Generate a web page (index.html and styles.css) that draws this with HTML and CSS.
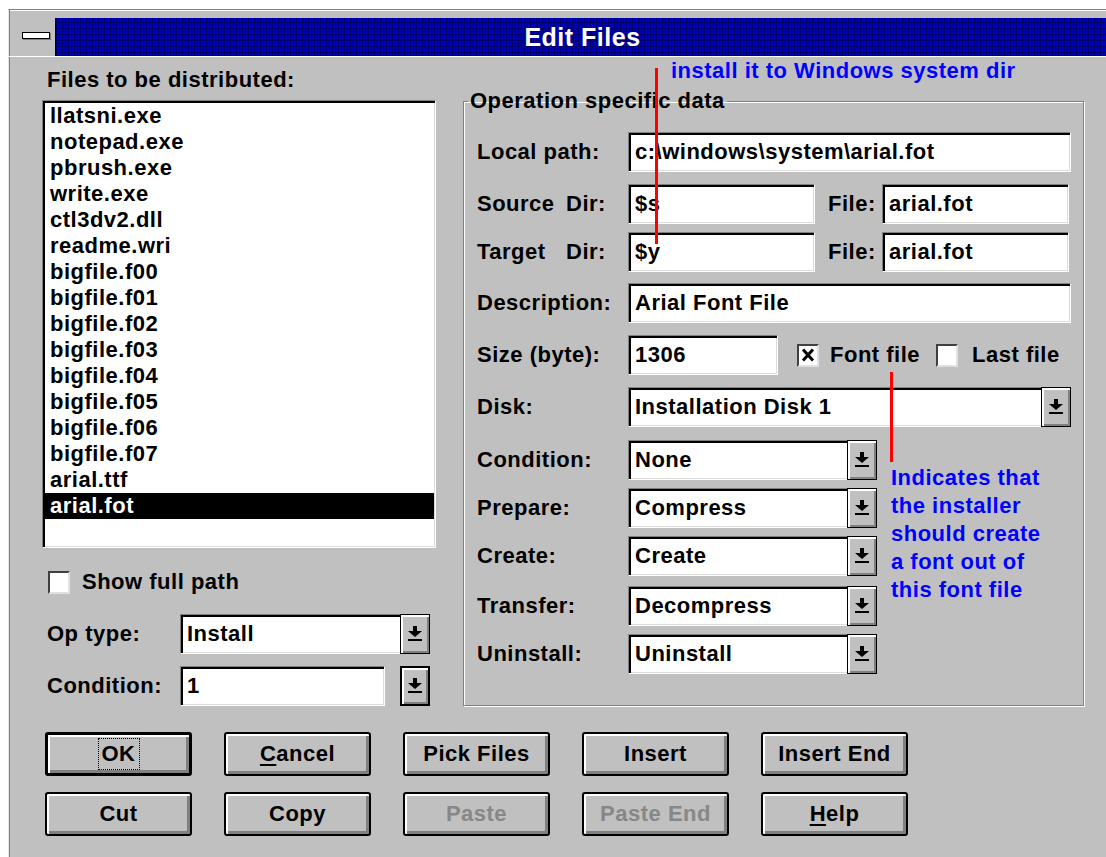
FILE: index.html
```html
<!DOCTYPE html>
<html lang="en">
<head>
<meta charset="utf-8">
<title>Edit Files</title>
<link rel="stylesheet" href="styles.css">
</head>
<body>
<div class="window">
  <div class="titlebar">
    <div class="sysmenu"><span class="sysbar"></span></div>
    <div class="caption">Edit Files</div>
  </div>

  <div class="client">
    <div class="main">
      <div class="leftcol">
        <div class="files-label">Files to be distributed:</div>
        <ul class="listbox sunken">
          <li>llatsni.exe</li>
          <li>notepad.exe</li>
          <li>pbrush.exe</li>
          <li>write.exe</li>
          <li>ctl3dv2.dll</li>
          <li>readme.wri</li>
          <li>bigfile.f00</li>
          <li>bigfile.f01</li>
          <li>bigfile.f02</li>
          <li>bigfile.f03</li>
          <li>bigfile.f04</li>
          <li>bigfile.f05</li>
          <li>bigfile.f06</li>
          <li>bigfile.f07</li>
          <li>arial.ttf</li>
          <li class="selected">arial.fot</li>
        </ul>

        <div class="check show-path"><span class="box sunken-box"></span><span>Show full path</span></div>

        <div class="left-row optype">
          <span class="left-label">Op type:</span>
          <div class="combo sunken w-op">
            <span class="value">Install</span>
            <span class="drop"><svg class="arrow" viewBox="0 0 14 16" width="14" height="16"><rect x="5" y="0" width="4" height="5"/><polygon points="0,5 14,5 7,11"/><rect x="0" y="13" width="14" height="2"/></svg></span>
          </div>
        </div>

        <div class="left-row cond">
          <span class="left-label">Condition:</span>
          <div class="edit sunken w-cond"><span class="value">1</span></div>
          <span class="drop solo"><svg class="arrow" viewBox="0 0 14 16" width="14" height="16"><rect x="5" y="0" width="4" height="5"/><polygon points="0,5 14,5 7,11"/><rect x="0" y="13" width="14" height="2"/></svg></span>
        </div>
      </div>

      <fieldset class="group">
        <legend>Operation specific data</legend>
        <div class="form">
          <span class="lbl">Local path:</span>
          <div class="edit sunken w-full"><span class="value">c:\windows\system\arial.fot</span></div>

          <span class="lbl"><span class="lbl-word">Source</span>Dir:</span>
          <div class="pair">
            <div class="edit sunken w-half"><span class="value">$s</span></div>
            <span class="file-lbl">File:</span>
            <div class="edit sunken w-half"><span class="value">arial.fot</span></div>
          </div>

          <span class="lbl"><span class="lbl-word">Target</span>Dir:</span>
          <div class="pair">
            <div class="edit sunken w-half"><span class="value">$y</span></div>
            <span class="file-lbl">File:</span>
            <div class="edit sunken w-half"><span class="value">arial.fot</span></div>
          </div>

          <span class="lbl">Description:</span>
          <div class="edit sunken w-full"><span class="value">Arial Font File</span></div>

          <span class="lbl">Size (byte):</span>
          <div class="pair">
            <div class="edit sunken w-size"><span class="value">1306</span></div>
            <div class="check font-check">
              <span class="box sunken-box"><svg viewBox="0 0 18 18" width="18" height="18"><path d="M4 3.5 L14 14.5 M14 3.5 L4 14.5" stroke="#000" stroke-width="3" fill="none"/></svg></span>
              <span>Font file</span>
            </div>
            <div class="check last-check"><span class="box sunken-box"></span><span>Last file</span></div>
          </div>

          <span class="lbl">Disk:</span>
          <div class="combo sunken w-full">
            <span class="value">Installation Disk 1</span>
            <span class="drop"><svg class="arrow" viewBox="0 0 14 16" width="14" height="16"><rect x="5" y="0" width="4" height="5"/><polygon points="0,5 14,5 7,11"/><rect x="0" y="13" width="14" height="2"/></svg></span>
          </div>

          <span class="lbl">Condition:</span>
          <div class="combo sunken w-combo">
            <span class="value">None</span>
            <span class="drop"><svg class="arrow" viewBox="0 0 14 16" width="14" height="16"><rect x="5" y="0" width="4" height="5"/><polygon points="0,5 14,5 7,11"/><rect x="0" y="13" width="14" height="2"/></svg></span>
          </div>

          <span class="lbl">Prepare:</span>
          <div class="combo sunken w-combo">
            <span class="value">Compress</span>
            <span class="drop"><svg class="arrow" viewBox="0 0 14 16" width="14" height="16"><rect x="5" y="0" width="4" height="5"/><polygon points="0,5 14,5 7,11"/><rect x="0" y="13" width="14" height="2"/></svg></span>
          </div>

          <span class="lbl">Create:</span>
          <div class="combo sunken w-combo">
            <span class="value">Create</span>
            <span class="drop"><svg class="arrow" viewBox="0 0 14 16" width="14" height="16"><rect x="5" y="0" width="4" height="5"/><polygon points="0,5 14,5 7,11"/><rect x="0" y="13" width="14" height="2"/></svg></span>
          </div>

          <span class="lbl">Transfer:</span>
          <div class="combo sunken w-combo">
            <span class="value">Decompress</span>
            <span class="drop"><svg class="arrow" viewBox="0 0 14 16" width="14" height="16"><rect x="5" y="0" width="4" height="5"/><polygon points="0,5 14,5 7,11"/><rect x="0" y="13" width="14" height="2"/></svg></span>
          </div>

          <span class="lbl">Uninstall:</span>
          <div class="combo sunken w-combo">
            <span class="value">Uninstall</span>
            <span class="drop"><svg class="arrow" viewBox="0 0 14 16" width="14" height="16"><rect x="5" y="0" width="4" height="5"/><polygon points="0,5 14,5 7,11"/><rect x="0" y="13" width="14" height="2"/></svg></span>
          </div>
        </div>
      </fieldset>
    </div>

    <div class="buttons">
      <button class="btn default"><span class="focus">OK</span></button>
      <button class="btn"><u>C</u>ancel</button>
      <button class="btn">Pick Files</button>
      <button class="btn">Insert</button>
      <button class="btn">Insert End</button>
      <button class="btn">Cut</button>
      <button class="btn">Copy</button>
      <button class="btn disabled">Paste</button>
      <button class="btn disabled">Paste End</button>
      <button class="btn"><u>H</u>elp</button>
    </div>
  </div>

  <!-- callout notes drawn over the dialog -->
  <span class="pointer pointer-dir"></span>
  <div class="note note-dir">install it to Windows system dir</div>
  <span class="pointer pointer-font"></span>
  <div class="note note-font">Indicates that<br>the installer<br>should create<br>a font out of<br>this font file</div>
</div>
</body>
</html>
```

FILE: styles.css
```css
html, body {
  margin: 0;
  padding: 0;
  background: #fff;
  overflow: hidden;
}

body {
  font-family: "Liberation Sans", Arial, sans-serif;
  font-weight: bold;
  font-size: 22px;
  letter-spacing: 0.5px;
  color: #000;
}

/* dialog frame */
.window {
  position: relative;
  margin: 9px 0 0 8px;
  width: 1110px;
  height: 860px;
  background: #c0c0c0;
  border-top: 1px solid #808080;
  border-left: 1px solid #e4e4e4;
  box-shadow: inset 1px 0 0 #808080, inset 0 1px 0 #fff;
}

.titlebar {
  display: flex;
  height: 38px;
  margin: 8px 0 0 8px;
}

.sysmenu {
  width: 38px;
  background: #c0c0c0;
  border-right: 1px solid #000;
  display: flex;
  align-items: center;
  justify-content: center;
}

.sysbar {
  width: 26px;
  height: 5px;
  background: #fff;
  border: 1px solid #000;
  box-shadow: 1px 1px 0 #808080;
  margin-top: -3px;
}

.caption {
  flex: 1;
  color: #fff;
  font-size: 25px;
  line-height: 38px;
  text-align: center;
  padding-right: 10px;
  background-color: #0000b8;
  background-image:
    repeating-linear-gradient(90deg, rgba(0, 0, 40, 0.45) 0 1px, transparent 1px 3px),
    repeating-linear-gradient(0deg, rgba(0, 0, 40, 0.45) 0 1px, transparent 1px 3px);
}

.client {
  padding: 11px 0 0 0;
  box-shadow: inset 0 1px 0 #fff;
}

.main {
  display: flex;
  align-items: flex-start;
  gap: 27px;
  padding-left: 33px;
}

/* 3D sunken well used by list, edits and combos */
.sunken {
  border: 1px solid;
  border-color: #808080 #fff #fff #808080;
  box-shadow: inset 2px 2px 0 #000, inset -1px -1px 0 #dcdcdc;
  background: #fff;
  box-sizing: border-box;
}

.leftcol {
  width: 394px;
  display: flex;
  flex-direction: column;
}

.files-label {
  line-height: 26px;
  margin-left: 5px;
}

.listbox {
  list-style: none;
  margin: 7px 0 0 0;
  padding: 2px 1px 0 2px;
  height: 448px;
}

.listbox li {
  height: 26px;
  line-height: 26px;
  padding-left: 5px;
}

.listbox li.selected {
  background: #000;
  color: #fff;
}

/* check boxes */
.check {
  display: flex;
  align-items: center;
  gap: 12px;
  line-height: 24px;
}

.box {
  width: 22px;
  height: 23px;
  box-sizing: border-box;
  display: flex;
  align-items: center;
  justify-content: center;
}

.sunken-box {
  background: #fff;
  border: 2px solid;
  border-color: #404040 #e0e0e0 #e0e0e0 #404040;
}

.show-path {
  margin: 22px 0 0 6px;
}

.left-row {
  display: flex;
  align-items: center;
  height: 40px;
  margin-left: 5px;
}

.optype { margin-top: 20px; }
.cond { margin-top: 12px; }

.left-label {
  width: 133px;
}

.w-op { width: 250px; }
.w-cond { width: 205px; }

.edit, .combo {
  height: 40px;
  display: flex;
  align-items: center;
}

.value {
  padding-left: 6px;
  flex: 1;
  white-space: nowrap;
  overflow: hidden;
}

/* drop-down button of a combo */
.drop {
  width: 30px;
  height: 100%;
  box-sizing: border-box;
  background: #c0c0c0;
  border: 1px solid #000;
  box-shadow: inset 2px 2px 0 #fff, inset -2px -2px 0 #808080;
  display: flex;
  align-items: center;
  justify-content: center;
}

.combo .drop {
  margin-right: -1px;
  height: calc(100% + 2px);
}

.drop.solo {
  height: 40px;
  margin-left: 15px;
  border-width: 2px;
}

.arrow { display: block; fill: #000; }

/* right-hand group box */
.group {
  margin: 22px 0 0 0;
  padding: 0 12px 31px 13px;
  width: 621px;
  box-sizing: border-box;
  min-width: 0;
  border: 1px solid #808080;
  box-shadow: inset 1px 1px 0 #fff, 1px 1px 0 #fff;
}

.group legend {
  padding: 0 2px;
  margin-left: -9px;
  line-height: 24px;
}

.form {
  margin-top: 19px;
  display: grid;
  grid-template-columns: 151px 443px;
  grid-template-rows: 52px 48px 51px 52px 52px 53px 48px 48px 50px 48px 40px;
  align-items: start;
}

.lbl {
  line-height: 40px;
  white-space: nowrap;
}

.lbl-word {
  display: inline-block;
  width: 89px;
}

.w-full { width: 443px; }
.w-half { width: 187px; flex: none; }
.w-size { width: 150px; flex: none; }
.w-combo { width: 249px; }

.pair {
  display: flex;
  align-items: center;
  height: 40px;
}

.file-lbl {
  width: 67px;
  flex: none;
  padding-left: 13px;
  box-sizing: border-box;
  white-space: nowrap;
}

.font-check { margin-left: 19px; gap: 11px; }
.last-check { margin-left: 16px; gap: 14px; }

/* push buttons */
.buttons {
  display: grid;
  grid-template-columns: repeat(5, 147px);
  grid-auto-rows: 44px;
  column-gap: 32px;
  row-gap: 16px;
  padding: 26px 0 0 36px;
}

.btn {
  font: inherit;
  letter-spacing: inherit;
  color: #000;
  background: #c0c0c0;
  border: 2px solid #000;
  border-radius: 3px;
  box-shadow: inset 2px 2px 0 #fff, inset -3px -3px 0 #808080;
  padding: 0;
  display: flex;
  align-items: center;
  justify-content: center;
}

.btn.default {
  border-width: 3px;
}

.btn.disabled {
  color: #878787;
}

.btn u {
  text-decoration-thickness: 2px;
  text-underline-offset: 3px;
}

.focus {
  outline: 1px dotted #000;
  outline-offset: 2px;
  padding: 0 1px;
}

/* callout notes */
.pointer {
  position: absolute;
  width: 3px;
  background: #ff0000;
}

.pointer-dir { left: 646px; top: 58px; height: 176px; }
.pointer-font { left: 881px; top: 362px; height: 90px; }

.note {
  position: absolute;
  color: #0000ff;
  white-space: nowrap;
}

.note-dir { left: 662px; top: 48px; line-height: 26px; }
.note-font { left: 882px; top: 454px; line-height: 28px; }
```
